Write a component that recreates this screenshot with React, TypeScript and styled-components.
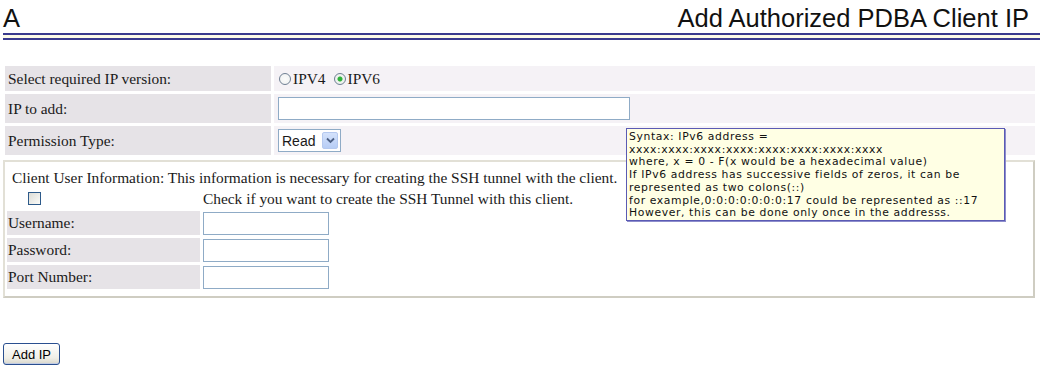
import React from 'react';
import styled, { createGlobalStyle } from 'styled-components';

const GlobalStyle = createGlobalStyle`
  body {
    margin: 0;
    background: #ffffff;
  }
`;

const Page = styled.div`
  position: relative;
  width: 1048px;
  height: 377px;
  padding: 0 8px 0 3px;
  box-sizing: border-box;
  font-family: 'Liberation Serif', 'Times New Roman', serif;
  color: #1a1a1a;
`;

const Header = styled.div`
  display: flex;
  justify-content: space-between;
  align-items: flex-end;
  height: 31px;
  padding-right: 11px;
  font-family: 'Liberation Sans', Arial, sans-serif;
  font-size: 25.5px;
  color: #111;
  line-height: 1;
`;

const Rule = styled.div`
  margin-top: 2px;
  height: 3px;
  border-top: 2px solid #3a3a8e;
  border-bottom: 2px solid #3a3a8e;
  background: #fdfbe8;
`;

const FormGrid = styled.div`
  display: grid;
  grid-template-columns: 266px 1fr;
  grid-template-rows: 25px 29px 29px;
  gap: 3px 3px;
  margin: 26px 5px 0 2px;
`;

const LabelCell = styled.div`
  background: #e6e3e7;
  display: flex;
  align-items: center;
  padding-left: 3px;
  font-size: 15.4px;
`;

const ValueCell = styled.div`
  background: #f5f2f6;
  display: flex;
  align-items: center;
  padding-left: 4px;
  font-size: 15.4px;
  gap: 3px;
`;

const RadioLabel = styled.label`
  display: inline-flex;
  align-items: center;
  margin-right: 4px;
`;

const Radio = styled.span<{ checked?: boolean }>`
  width: 12px;
  height: 12px;
  border-radius: 50%;
  border: 1px solid #6f7f93;
  background: radial-gradient(circle, ${p => (p.checked ? '#2fb23a 0, #2fb23a 2px, #eef3ee 3px' : '#fbfbfb 0')}, #eef0f0 100%);
  margin: 0 2px 0 1px;
  box-sizing: border-box;
`;

const TextInput = styled.input<{ w: number; h: number }>`
  width: ${p => p.w}px;
  height: ${p => p.h}px;
  box-sizing: border-box;
  border: 1px solid #8fabc6;
  background: #fff;
  padding: 0 2px;
  font-size: 13px;
`;

const SelectBox = styled.div`
  display: inline-flex;
  align-items: center;
  height: 23px;
  width: 63px;
  box-sizing: border-box;
  border: 1px solid #8fabc6;
  background: #fff;
  font-family: 'Liberation Sans', Arial, sans-serif;
  font-size: 14px;
  padding: 0 2px 0 3px;
  justify-content: space-between;
`;

const SelectArrow = styled.span`
  width: 16px;
  height: 17px;
  border-radius: 2px;
  background: linear-gradient(#d4e2fb, #b7cdf5);
  border: 1px solid #b5c9ef;
  box-sizing: border-box;
  display: flex;
  align-items: center;
  justify-content: center;
`;

const Tooltip = styled.div`
  position: absolute;
  left: 626px;
  top: 128px;
  width: 379px;
  height: 93px;
  box-sizing: border-box;
  background: #ffffe4;
  border: 1px solid #5a5ab4;
  box-shadow: 1px 1px 0 #8d8dcc;
  padding: 2px 2px;
  font-family: 'DejaVu Sans', Verdana, sans-serif;
  font-size: 10.8px;
  letter-spacing: 0.62px;
  white-space: nowrap;
  line-height: 12.7px;
  color: #111;
  z-index: 2;
`;

const ClientBox = styled.div`
  margin: 5px 5px 0 0;
  height: 138px;
  box-sizing: border-box;
  border: 2px solid #e2e0d6;
  border-right-color: #cfcdc2;
  border-bottom-color: #cfcdc2;
  padding: 6px 0 0 2px;
  font-size: 15.4px;
`;

const InfoLine = styled.div`
  padding-left: 5px;
  height: 19px;
  line-height: 19px;
`;

const CheckRow = styled.div`
  display: grid;
  grid-template-columns: 196px 1fr;
  align-items: center;
  height: 23px;
`;

const CheckBox = styled.span`
  display: block;
  width: 13px;
  height: 13px;
  margin-left: 21px;
  box-sizing: border-box;
  border: 1px solid #2d5a8a;
  background: linear-gradient(135deg, #dcdcd6, #fbfbf8);
`;

const ClientGrid = styled.div`
  display: grid;
  grid-template-columns: 193px 1fr;
  grid-auto-rows: 24px;
  row-gap: 3px;
  column-gap: 3px;
  margin-top: 1px;
`;

const ClientLabel = styled.div`
  background: #e6e3e7;
  display: flex;
  align-items: center;
  padding-left: 1px;
`;

const ClientValue = styled.div`
  display: flex;
  align-items: center;
`;

const AddButton = styled.button`
  margin-top: 45px;
  width: 57px;
  height: 22px;
  border: 1px solid #2a4f8f;
  border-radius: 3px;
  background: linear-gradient(#ffffff, #f0efe7 70%, #d8d6cb);
  box-shadow: inset 0 -1px 0 #c0cbe4;
  font-family: 'Liberation Sans', Arial, sans-serif;
  font-size: 13px;
  color: #000;
  padding: 0;
`;

const tooltipLines = [
  'Syntax: IPv6 address =',
  'xxxx:xxxx:xxxx:xxxx:xxxx:xxxx:xxxx:xxxx',
  'where, x = 0 - F(x would be a hexadecimal value)',
  'If IPv6 address has successive fields of zeros, it can be',
  'represented as two colons(::)',
  'for example,0:0:0:0:0:0:0:17 could be represented as ::17',
  'However, this can be done only once in the addresss.',
];

const clientFields = ['Username:', 'Password:', 'Port Number:'];

const App: React.FC = () => {
  return (
    <Page>
      <GlobalStyle />
      <Header>
        <span>A</span>
        <span>Add Authorized PDBA Client IP</span>
      </Header>
      <Rule />

      <FormGrid>
        <LabelCell>Select required IP version:</LabelCell>
        <ValueCell>
          <RadioLabel>
            <Radio />
            IPV4
          </RadioLabel>
          <RadioLabel>
            <Radio checked />
            IPV6
          </RadioLabel>
        </ValueCell>
        <LabelCell>IP to add:</LabelCell>
        <ValueCell>
          <TextInput w={352} h={23} />
        </ValueCell>
        <LabelCell>Permission Type:</LabelCell>
        <ValueCell>
          <SelectBox>
            <span>Read</span>
            <SelectArrow>
              <svg width="9" height="7" viewBox="0 0 9 7">
                <path d="M1 1.5 L4.5 5 L8 1.5" fill="none" stroke="#4d6185" strokeWidth="1.8" />
              </svg>
            </SelectArrow>
          </SelectBox>
        </ValueCell>
      </FormGrid>

      <Tooltip>
        {tooltipLines.map(line => (
          <div key={line}>{line}</div>
        ))}
      </Tooltip>

      <ClientBox>
        <InfoLine>
          Client User Information: This information is necessary for creating the SSH tunnel with the client.
        </InfoLine>
        <CheckRow>
          <CheckBox />
          <span>Check if you want to create the SSH Tunnel with this client.</span>
        </CheckRow>
        <ClientGrid>
          {clientFields.map(f => (
            <React.Fragment key={f}>
              <ClientLabel>{f}</ClientLabel>
              <ClientValue>
                <TextInput w={126} h={23} />
              </ClientValue>
            </React.Fragment>
          ))}
        </ClientGrid>
      </ClientBox>

      <AddButton>Add IP</AddButton>
    </Page>
  );
};

export default App;
